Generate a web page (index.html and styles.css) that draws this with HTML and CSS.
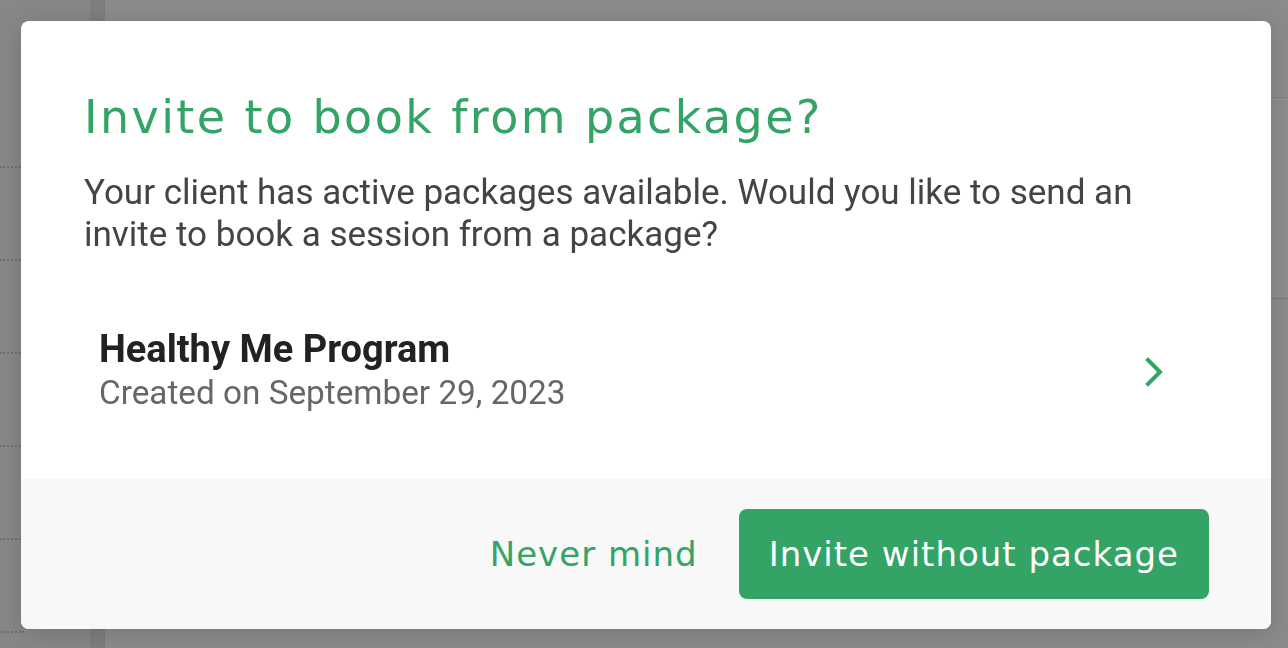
FILE: index.html
```html
<!DOCTYPE html>
<html>
  <head>
    <meta charset="UTF-8" />
    <title>Invite to book from package</title>
    <link rel="stylesheet" href="styles.css">
  </head>
  <body>
    <div class="page">
      <aside class="rail">
        <div class="rail-row"></div>
        <div class="rail-row"></div>
        <div class="rail-row"></div>
        <div class="rail-row"></div>
        <div class="rail-row"></div>
        <div class="rail-row"></div>
      </aside>
      <div class="divider"></div>
      <main class="content">
        <div class="topbar"></div>
        <div class="card"></div>
      </main>
    </div>

    <div class="overlay">
      <div class="modal">
        <div class="modal-body">
          <h1 class="modal-title">Invite to book from package?</h1>
          <p class="modal-text">Your client has active packages available. Would you like to send an invite to book a session from a package?</p>

          <div class="package">
            <div class="package-info">
              <div class="package-name">Healthy Me Program</div>
              <div class="package-date">Created on September 29, 2023</div>
            </div>
            <svg class="chevron" width="20" height="30" viewBox="0 0 20 30">
              <path d="M3 3 L15 15 L3 27" fill="none" stroke="#33a466" stroke-width="4" stroke-linecap="square" stroke-linejoin="miter" />
            </svg>
          </div>
        </div>

        <div class="modal-footer">
          <button class="btn-link">Never mind</button>
          <button class="btn-primary">Invite without package</button>
        </div>
      </div>
    </div>
  </body>
</html>
```

FILE: styles.css
```css
html, body {
  margin: 0;
  height: 100%;
  overflow: hidden;
}

body {
  background-color: #8a8a8a;
  font-family: 'Roboto', 'Liberation Sans', sans-serif;
}

/* page behind the dialog, dimmed */

.page {
  display: flex;
  height: 100%;
}

.rail {
  width: 90px;
  padding-top: 75px;
  background-color: #878787;
}

.rail-row {
  height: 91px;
  border-bottom: 2px dotted #6f6f6f;
  width: 24px;
}

.divider {
  width: 15px;
  background-color: #7e7e7e;
}

.content {
  flex: 1;
  background-color: #8b8b8b;
}

.topbar {
  height: 97px;
  border-bottom: 1px solid #818181;
}

.card {
  height: 200px;
  margin-left: 40px;
  border-bottom: 1px solid #7a7a7a;
  background-color: #8d8d8d;
}

/* dialog */

.overlay {
  position: fixed;
  top: 0;
  left: 0;
  right: 0;
  bottom: 0;
  padding: 21px 17px 19px 21px;
  display: flex;
}

.modal {
  flex: 1;
  display: flex;
  flex-direction: column;
  background-color: #fff;
  border-radius: 8px;
  overflow: hidden;
  box-shadow: 0 4px 24px rgba(0, 0, 0, 0.15);
}

.modal-body {
  flex: 1;
  padding: 73px 63px 0;
}

.modal-title {
  margin: 0;
  font-family: 'DejaVu Sans', sans-serif;
  font-weight: 400;
  font-size: 46px;
  letter-spacing: 2.4px;
  line-height: 1;
  color: #33a466;
}

.modal-text {
  margin: 32px 0 0;
  font-size: 35px;
  line-height: 42px;
  color: #444;
}

.package {
  display: flex;
  align-items: center;
  margin-top: 71px;
  padding: 0 43px 0 15px;
}

.package-info {
  flex: 1;
}

.package-name {
  font-size: 38px;
  font-weight: 700;
  line-height: 44px;
  color: #222;
}

.package-date {
  font-size: 33.3px;
  line-height: 44px;
  color: #666;
}

.chevron {
  margin-top: 2px;
}

.modal-footer {
  height: 150px;
  display: flex;
  align-items: center;
  justify-content: flex-end;
  gap: 41px;
  padding-right: 62px;
  background-color: #f8f8f8;
}

.btn-link, .btn-primary {
  font-family: 'DejaVu Sans', sans-serif;
  font-size: 34px;
  letter-spacing: 1px;
  border: none;
  cursor: pointer;
}

.btn-link {
  background: none;
  padding: 0;
  color: #33a466;
}

.btn-primary {
  height: 90px;
  padding: 0 30px;
  border-radius: 8px;
  background-color: #33a466;
  color: #fff;
}
```
